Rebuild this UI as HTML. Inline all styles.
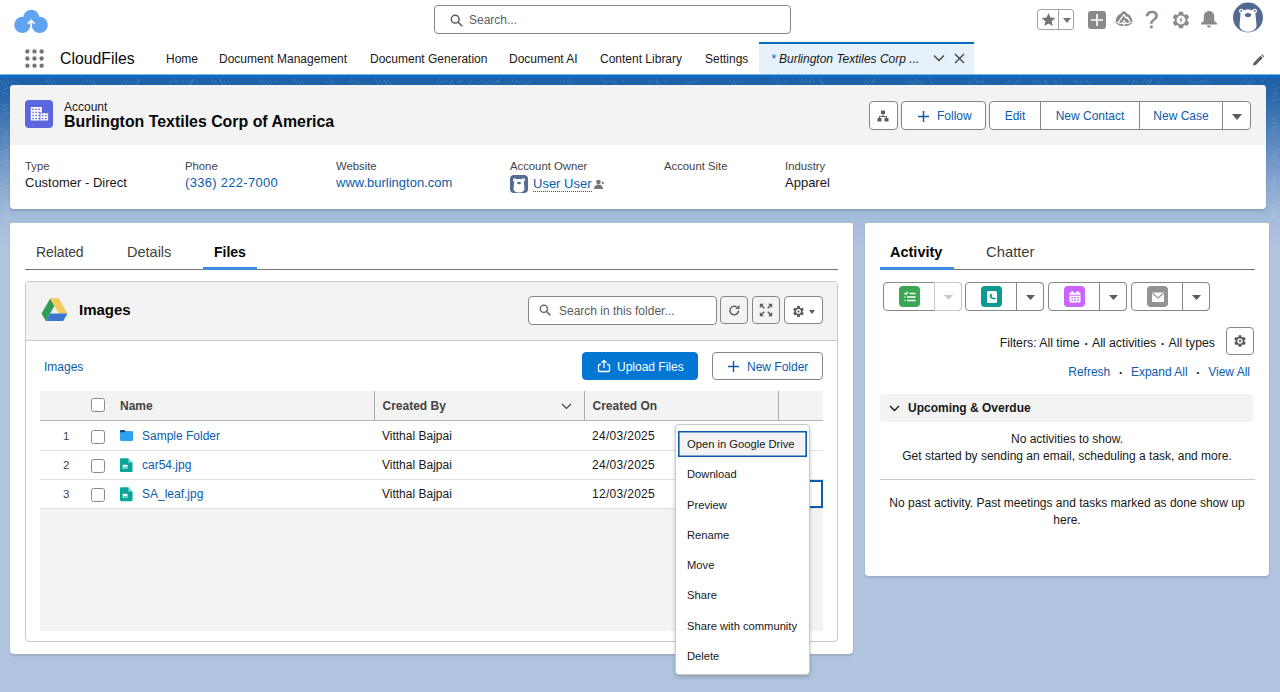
<!DOCTYPE html>
<html lang="en">
<head>
<meta charset="utf-8">
<title>Burlington Textiles Corp of America | Account | Salesforce</title>
<style>
*{box-sizing:border-box;margin:0;padding:0}
html,body{width:1280px;height:692px;overflow:hidden}
body{font-family:"Liberation Sans",sans-serif;font-size:12px;color:#181818;background:#b0c4df;position:relative}
a{color:#0b5cab;text-decoration:none}
.abs{position:absolute}
.t{position:absolute;white-space:nowrap;line-height:16px}
#bg{position:absolute;left:0;top:74px;width:1280px;height:618px;background:linear-gradient(to bottom,#1a5da6 0px,#2c69ac 25px,#5d8abf 70px,#88a7cf 110px,#a6bcdb 145px,#b0c4df 175px,#b0c4df 100%)}
#hdr{position:absolute;left:0;top:0;width:1280px;height:78px;background:#fff;border-bottom:3px solid #0b6cc4;box-shadow:inset 0 -1px 0 #7fb2e0}
.btn{position:absolute;height:28px;border:1px solid #868686;background:#fff;color:#0b5cab;font-size:12px;line-height:27px;padding-top:1px;text-align:center;white-space:nowrap}
.card{position:absolute;background:#fff;border-radius:4px;box-shadow:0 2px 2px rgba(0,0,0,.12)}
.lbl{color:#444;font-size:11.300px}
.val{font-size:13px;line-height:18px}

.tab{font-size:14px;line-height:20px;color:#3e3e3c}
table th{text-align:left;font-weight:bold;color:#444;padding:1px 0 0 7px;font-size:12px;position:relative}
table th.bl{border-left:1px solid #aeaeae}
table td{position:relative;height:29.300px;padding:0 0 0 7px;background:#fff;border-top:1px solid #e0e0e0;border-bottom:1px solid #e0e0e0;white-space:nowrap}
.cb{position:absolute;width:14px;height:14px;border:1px solid #8a8a8a;border-radius:2.500px;background:#fff}
.rn{position:absolute;left:23px;top:6px;font-size:11.500px;line-height:16px;color:#444}
.mi{height:26px;margin-bottom:4.250px;line-height:26px;padding-left:11px;color:#181818;white-space:nowrap}

.bg2{position:absolute;top:58px;width:79px;height:29px;border:1px solid #868686;border-radius:4px;background:#fff}
.bg2 .ic{position:absolute;left:15px;top:3px;width:21px;height:21px;border-radius:4px;display:flex;align-items:center;justify-content:center}
.bg2 .ar{position:absolute;left:50px;top:-1px;width:28px;height:29px;border:1px solid #868686;border-radius:0 4px 4px 0;display:flex;align-items:center;justify-content:center;background:#fff}
.ctr{left:0;width:404px;text-align:center;font-size:12px;color:#181818}

.dot{margin:0 1.700px;font-size:8px;position:relative;top:-1px}
.dot2{margin:0 8.900px;font-size:8px;position:relative;top:-1px;color:#181818}

td.dt{padding-left:8px;letter-spacing:.3px}

thead th{border-bottom:1px solid #b5b5b5}

.hb{height:29px;line-height:27px}

tr.r1 td{height:30.300px;padding-top:1px}

.r1 .rn,.r1 .cb,.r1 svg{margin-top:1px}
</style>
</head>
<body>
<div id="bg"></div>
<svg class="abs" style="left:0;top:78px;pointer-events:none" width="1280" height="160" viewBox="0 0 1280 160" fill="none" stroke="#fff" stroke-width=".8" stroke-opacity=".16"><path d="M4.0 7.1l-5.2 -6.5M6.9 7.3l-4.5 -5.6M10.2 6.0l-4.3 -5.4M13.4 5.1l-2.8 -3.5M18.4 6.6l-3.3 -4.2M48.2 5.6l-2.5 -5.0M51.7 6.0l-2.6 -5.3M55.3 6.4l-2.4 -4.8M88.5 5.2l-2.2 -4.4M92.3 6.5l-2.5 -4.9M95.5 6.9l-2.7 -5.4M121.9 6.7l3.1 -4.7M125.0 6.3l3.1 -4.7M129.9 5.7l2.5 -3.8M134.4 6.0l3.5 -5.3M137.3 6.2l3.6 -5.4M136.2 6.9l3.4 -5.1M169.2 6.2l3.4 -5.0M173.1 5.2l3.1 -4.6M175.6 5.2l2.2 -3.3M180.7 6.4l3.6 -5.3M184.2 6.8l3.6 -5.4M189.4 7.4l4.1 -6.2M189.0 6.2l3.0 -4.5M191.0 6.8l3.8 -5.8M196.1 6.2l2.6 -3.9M214.0 6.1l-2.7 -5.3M217.6 7.5l-2.8 -5.6M221.6 5.6l-2.2 -4.3M222.8 6.6l-2.9 -5.8M225.3 5.5l-1.6 -3.3M230.0 6.3l-2.8 -5.5M262.6 6.5l-4.0 -5.0M266.3 7.2l-5.3 -6.6M270.3 7.0l-3.8 -4.7M272.6 5.3l-3.2 -4.0M277.3 5.2l-3.6 -4.5M294.7 5.0l-2.9 -4.4M297.7 5.9l-3.5 -5.2M300.4 6.5l-2.9 -4.3M303.8 5.9l-3.2 -4.9M328.4 6.2l-2.5 -3.7M331.9 5.3l-3.1 -4.6M334.9 7.1l-4.0 -6.0M352.1 5.4l-3.0 -3.8M355.6 6.3l-4.6 -5.8M360.4 6.7l-3.6 -4.5M378.9 6.4l-4.3 -5.4M382.4 6.5l-3.8 -4.8M386.7 5.5l-2.8 -3.5M388.3 7.0l-4.6 -5.7M391.2 6.8l-4.3 -5.3M436.1 6.5l3.8 -5.6M439.4 6.8l3.1 -4.7M442.7 5.2l1.8 -2.8M444.9 5.8l2.9 -4.4M450.0 6.5l2.7 -4.1M450.1 5.9l2.4 -3.5M458.3 5.3l2.1 -3.1M459.5 5.5l2.4 -3.6M468.4 6.6l3.5 -5.2M478.4 5.2l3.2 -3.2M481.4 5.1l2.6 -2.6M485.6 6.6l5.2 -5.2M489.3 6.2l4.5 -4.5M494.8 6.4l5.6 -5.6M492.5 6.8l4.7 -4.7M496.0 5.3l3.3 -3.3M507.6 7.2l6.3 -6.3M515.2 5.8l2.5 -3.8M518.8 5.2l2.0 -3.0M522.9 6.7l2.9 -4.4M527.1 7.1l3.7 -5.5M565.3 7.2l-2.8 -5.7M569.2 6.9l-2.6 -5.2M571.4 6.5l-2.9 -5.8M574.3 6.7l-3.0 -6.1M604.3 5.5l-3.2 -4.9M607.2 6.1l-3.6 -5.4M610.0 5.2l-1.9 -2.9M614.1 6.5l-2.7 -4.1M616.6 6.3l-3.5 -5.2M624.0 5.6l-2.7 -4.1M650.1 6.1l-2.6 -5.2M653.5 5.8l-2.3 -4.5M657.6 5.5l-2.1 -4.2M659.7 6.9l-3.1 -6.2M666.5 5.9l-2.1 -4.1M683.7 6.0l3.6 -3.6M687.2 7.1l4.6 -4.6M689.7 6.3l4.9 -4.9M693.5 5.8l4.9 -4.9M728.8 5.0l2.4 -3.7M732.0 6.3l3.0 -4.5M734.6 7.0l3.0 -4.5M778.4 6.9l-4.2 -6.4M781.6 6.1l-3.5 -5.3M786.5 5.6l-2.3 -3.5M801.7 5.7l-2.3 -4.5M805.6 7.2l-3.2 -6.4M808.0 5.2l-2.3 -4.7M811.2 5.6l-1.9 -3.8M814.3 5.0l-2.1 -4.3M822.6 7.3l-3.0 -6.0M823.7 6.8l-3.1 -6.2M864.2 5.8l3.3 -4.9M867.4 5.7l2.5 -3.7M871.2 5.9l3.3 -5.0M872.7 5.0l2.7 -4.0M909.6 6.1l-4.1 -5.1M913.4 6.6l-3.9 -4.8M916.8 7.4l-4.1 -5.1M919.3 5.6l-3.7 -4.6M921.9 6.8l-3.6 -4.6M924.6 7.5l-4.0 -5.0M933.5 6.6l-4.8 -6.0M970.3 6.0l-3.3 -4.1M973.8 6.5l-3.2 -4.1M977.8 5.5l-3.9 -4.9M979.8 5.9l-4.3 -5.4M983.3 5.8l-2.7 -3.3M984.5 5.5l-2.6 -3.3M1005.1 6.6l5.6 -5.6M1008.3 5.2l3.2 -3.2M1013.0 6.5l5.7 -5.7M1015.2 6.6l5.5 -5.5M1016.8 7.1l4.7 -4.7M1035.6 7.5l-3.2 -6.3M1038.6 6.6l-2.3 -4.7M1041.3 7.2l-2.5 -5.1M1046.6 7.0l-2.5 -5.1M1047.6 6.3l-2.4 -4.7M1055.5 7.1l-2.5 -5.0M1057.3 6.7l-2.2 -4.4M1062.0 5.1l-2.1 -4.1M1075.9 5.1l-2.5 -3.7M1078.7 5.6l-2.7 -4.0M1082.2 5.2l-2.5 -3.8M1088.2 5.2l-2.0 -2.9M1090.0 6.2l-2.8 -4.2M1127.3 5.6l2.4 -3.6M1131.0 7.1l3.8 -5.7M1133.1 5.7l2.3 -3.4M1135.9 5.5l2.5 -3.7M1141.8 6.6l3.6 -5.5M1146.1 5.3l2.4 -3.6M1148.1 7.4l4.0 -6.0M1147.8 6.2l3.5 -5.3M1157.6 6.2l3.4 -5.1M1191.3 6.2l-4.4 -5.5M1194.5 6.3l-4.5 -5.6M1199.7 6.0l-2.8 -3.5M1203.6 5.2l-2.3 -2.8M1203.0 5.7l-2.9 -3.7M1207.8 6.6l-3.9 -4.9M1210.5 5.9l-4.2 -5.2M1239.8 6.2l5.7 -5.7M1243.2 5.4l4.2 -4.2M1246.3 7.1l6.0 -6.0M1248.2 7.1l5.1 -5.1M1251.6 6.8l4.4 -4.4M1260.1 5.9l4.9 -4.9M2.7 12.0l5.3 -2.4M2.1 15.5l4.3 -1.3M2.5 28.4l4.8 -2.0M2.4 31.9l5.1 -1.1M3.8 35.4l6.4 -1.7M3.4 55.9l4.1 -1.5M2.9 59.4l6.3 -1.7M2.6 62.9l4.1 -1.1M2.8 73.9l4.8 -2.5M3.5 77.4l6.0 -2.2M2.5 80.9l5.4 -1.7M2.2 84.4l5.9 -2.8M3.0 87.9l6.4 -1.9M4.0 102.9l5.3 -2.7M2.4 106.4l4.3 -2.3M2.2 109.9l4.7 -2.5M3.1 113.4l6.7 -1.5M3.5 127.8l4.6 -2.5M3.5 131.3l5.5 -1.9M2.7 134.8l6.1 -1.9M3.6 138.3l6.5 -2.8M3.8 141.8l5.2 -1.7M1272.7 12.0l6.6 -3.0M1271.1 15.5l6.1 -1.2M1271.9 19.0l5.8 -3.0M1271.8 22.5l6.8 -1.3M1271.5 42.3l4.3 -2.7M1272.0 45.8l6.0 -1.1M1272.4 49.3l5.9 -1.5M1271.9 52.8l5.7 -2.9M1272.6 56.3l4.7 -1.2M1272.9 73.5l5.9 -1.9M1271.9 77.0l6.3 -2.8M1271.6 80.5l6.8 -2.6M1271.5 84.0l6.4 -3.0M1271.6 100.0l4.9 -1.3M1271.5 103.5l5.6 -1.9M1271.1 107.0l5.2 -1.7M1271.1 110.5l4.6 -1.2M1272.3 114.0l4.2 -2.5M1271.5 128.6l4.1 -2.3M1271.8 132.1l6.0 -2.6M1272.6 135.6l6.2 -2.0M1271.4 139.1l6.9 -2.4"/></svg>
<header id="hdr">
  <!-- logo -->
  <svg class="abs" style="left:13px;top:9px" width="36" height="26" viewBox="0 0 36 26">
    <circle cx="9.300" cy="15.900" r="8.100" fill="#62a3f0"/><circle cx="18.300" cy="8.700" r="7.900" fill="#62a3f0"/><circle cx="26.700" cy="15.900" r="8.100" fill="#62a3f0"/><path d="M12 9h12.500v9h-12.500z" fill="#62a3f0"/>
    <path d="M18.200 25v-12.500" stroke="#fff" stroke-width="1.700" fill="none"/><path d="M14.800 14.800l3.400-3.400 3.400 3.400" stroke="#fff" stroke-width="1.700" fill="none" stroke-linejoin="miter"/>
  </svg>
  <!-- search -->
  <div class="abs" style="left:434px;top:5px;width:357px;height:29px;border:1px solid #868686;border-radius:4px;background:#fff">
    <svg class="abs" style="left:15px;top:8px" width="13" height="13" viewBox="0 0 13 13"><circle cx="5.2" cy="5.2" r="3.9" fill="none" stroke="#5c5c5c" stroke-width="1.5"/><path d="M8.2 8.2l3.6 3.6" stroke="#5c5c5c" stroke-width="1.6" stroke-linecap="round"/></svg>
    <span class="t" style="left:34px;top:6px;font-size:12px;color:#5c5c5c">Search...</span>
  </div>
  <!-- global actions -->
  <div class="abs" style="left:1037px;top:9px;width:37px;height:21px;border:1px solid #a3a3a3;border-radius:3px">
    <span class="abs" style="left:20px;top:0;width:1px;height:19px;background:#a3a3a3"></span>
    <svg class="abs" style="left:3px;top:2px" width="15" height="15" viewBox="0 0 24 24"><path fill="#747474" d="M12 1.500l3.100 7.200 7.800.7-5.900 5.200 1.800 7.700L12 18.200l-6.800 4.100 1.800-7.700L1.100 9.400l7.800-.7z"/></svg>
    <svg class="abs" style="left:25px;top:8px" width="8" height="5" viewBox="0 0 8 5"><path d="M0 0h8L4 5z" fill="#747474"/></svg>
  </div>
  <svg class="abs" style="left:1088px;top:11px" width="18" height="18" viewBox="0 0 18 18"><rect width="18" height="18" rx="3" fill="#8a8a8a"/><path d="M9 3v12M3 9h12" stroke="#fff" stroke-width="1.600"/></svg>
  <svg class="abs" style="left:1115px;top:11px" width="18" height="17" viewBox="0 0 18 17"><path d="M9 .3c1.300 0 2 .8 2.900 2.300 2.700 1 5.300 3.900 5.500 8 .1 1.300-.7 2.200-1.600 2.700-2.100 1.200-4.500 1.900-6.800 1.900s-4.700-.7-6.800-1.900C1.300 12.800.5 11.900.6 10.600.8 6.500 3.400 3.600 6.100 2.600 7 1.100 7.700.3 9 .3z" fill="#8a8a8a"/><path d="M3.300 11.300L8.800 3.600l2.600 3.700 1-1.200 2.500 4.500" fill="none" stroke="#fff" stroke-width="1.300" stroke-linejoin="round"/><path d="M1.500 11.200c2.300 1 5 1.500 7.500 1.500s5.200-.5 7.500-1.500" fill="none" stroke="#fff" stroke-width="1.200"/><path d="M7.300 12.500l1.700-3 1.700 3M9 13v2.500" fill="none" stroke="#fff" stroke-width="1.100"/></svg>
  <span class="t" style="left:1145px;top:7px;font-size:24px;line-height:26px;color:#8a8a8a;-webkit-text-stroke:.4px #8a8a8a">?</span>
  <svg class="abs" style="left:1171px;top:10px" width="20" height="20" viewBox="0 0 24 24"><path fill="#8a8a8a" d="M19.400 13c.04-.33.070-.660.070-1s-.03-.67-.07-1l2.100-1.650c.19-.15.240-.420.120-.640l-2-3.460c-.12-.22-.39-.3-.61-.22l-2.490 1c-.52-.4-1.080-.73-1.690-.98l-.38-2.650A.488.488 0 0 0 14 2h-4c-.25 0-.46.180-.49.420l-.38 2.650c-.61.250-1.170.59-1.690.98l-2.490-1c-.23-.09-.49 0-.61.220l-2 3.460c-.13.220-.07.490.12.640L4.570 11c-.4.330-.7.670-.07 1s.3.670.07 1l-2.110 1.650c-.19.150-.24.420-.12.640l2 3.460c.12.220.39.300.61.220l2.490-1c.52.400 1.080.73 1.690.98l.38 2.650c.3.240.24.420.49.420h4c.25 0 .46-.18.490-.42l.38-2.650c.61-.25 1.170-.59 1.690-.98l2.490 1c.23.090.49 0 .61-.22l2-3.460c.12-.22.070-.49-.12-.64L19.400 13z"/><circle cx="12" cy="12" r="5.300" fill="#fff"/><path d="M13.200 7.800l-3.400 4.700h2l-1 3.700 3.400-4.700h-2z" fill="#8a8a8a"/></svg>
  <svg class="abs" style="left:1199px;top:10px" width="20" height="19" viewBox="0 0 20 19"><path d="M10 1c3 0 5.200 2.300 5.200 5.300v3.700c0 1.500 1.300 2.400 2.800 3v1.500H2V13c1.500-.6 2.800-1.500 2.800-3V6.300C4.800 3.300 7 1 10 1z" fill="#8a8a8a"/><path d="M8 15.500a2 2 0 0 0 4 0z" fill="#8a8a8a"/></svg>
  <!-- avatar -->
  <svg class="abs" style="left:1233px;top:2px" width="30" height="31" viewBox="0 0 30 31"><circle cx="15" cy="15.500" r="15" fill="#536a90"/><circle cx="8.300" cy="9" r="2.300" fill="#fff"/><circle cx="21.700" cy="9" r="2.300" fill="#fff"/><circle cx="8.300" cy="9" r="1" fill="#536a90"/><circle cx="21.700" cy="9" r="1" fill="#536a90"/><path d="M7.300 14C7.300 9.500 10.500 7.500 15 7.500s7.700 2 7.700 6.500l.8 9.500c0 3.500-3.800 6.300-8.500 6.300s-8.500-2.800-8.500-6.300z" fill="#fff"/><ellipse cx="15" cy="13" rx="3.200" ry="2" fill="#536a90"/></svg>

  <!-- nav -->
  <svg class="abs" style="left:25px;top:49px" width="19" height="19" viewBox="0 0 20 20" fill="#747474"><circle cx="2.500" cy="2.500" r="2.300"/><circle cx="10" cy="2.500" r="2.300"/><circle cx="17.500" cy="2.500" r="2.300"/><circle cx="2.500" cy="10" r="2.300"/><circle cx="10" cy="10" r="2.300"/><circle cx="17.500" cy="10" r="2.300"/><circle cx="2.500" cy="17.500" r="2.300"/><circle cx="10" cy="17.500" r="2.300"/><circle cx="17.500" cy="17.500" r="2.300"/></svg>
  <span class="t" style="left:60px;top:48px;font-size:15.800px;line-height:22px;color:#080707">CloudFiles</span>
  <nav>
    <a class="t nv" style="left:166px">Home</a>
    <a class="t nv" style="left:219px">Document Management</a>
    <a class="t nv" style="left:370px">Document Generation</a>
    <a class="t nv" style="left:509px">Document AI</a>
    <a class="t nv" style="left:600px">Content Library</a>
    <a class="t nv" style="left:705px">Settings</a>
  </nav>
  <div class="abs" style="left:759px;top:42px;width:215px;height:32px;background:#e5f1fb;border-top:2px solid #0b6cc4">
    <span class="t" style="left:12px;top:7px;font-size:12px;font-style:italic;color:#181818"><span style="color:#0b5cab">*</span> Burlington Textiles Corp ...</span>
    <svg class="abs" style="left:174px;top:10px" width="12" height="8" viewBox="0 0 12 8"><path d="M1 1.500l5 5 5-5" stroke="#444" stroke-width="1.400" fill="none"/></svg>
    <svg class="abs" style="left:195px;top:9px" width="11" height="11" viewBox="0 0 11 11"><path d="M1 1l9 9M10 1l-9 9" stroke="#444" stroke-width="1.400" fill="none"/></svg>
  </div>
  <svg class="abs" style="left:1252px;top:54px" width="12.500" height="12.500" viewBox="0 0 14 14"><path d="M1 13l.8-3.300L9.500 2l2.500 2.500-7.700 7.700z M10.300 1.200l1-1 2.500 2.500-1 1z" fill="#5c5c5c"/></svg>
</header>
<style>.nv{top:51px;font-size:12px;color:#181818}</style>
<main id="main">
<!-- record header -->
<section class="card" style="left:10px;top:85px;width:1256px;height:124px;overflow:hidden">
  <div class="abs" style="left:0;top:0;width:1256px;height:60px;background:#f3f3f3"></div>
  <svg class="abs" style="left:15px;top:15px" width="28" height="28" viewBox="0 0 28 28"><rect width="28" height="28" rx="4" fill="#5b65dd"/><path fill="#fff" d="M5.800 7h11v13.700h-11z"/><path fill="#fff" stroke="#5b65dd" stroke-width=".8" d="M15 12.900h8.300v8.200H15z"/><rect x="5" y="20.700" width="19" height="1.500" fill="#5b65dd"/><g fill="#5b65dd"><rect x="7.3" y="8.6" width="1.500" height="1.400"/><rect x="10.4" y="8.6" width="1.500" height="1.400"/><rect x="13.5" y="8.6" width="1.500" height="1.400"/><rect x="7.3" y="11.7" width="1.500" height="1.400"/><rect x="10.4" y="11.7" width="1.500" height="1.400"/><rect x="13.5" y="11.7" width="1.500" height="1.400"/><rect x="7.3" y="14.8" width="1.500" height="1.400"/><rect x="10.4" y="14.8" width="1.500" height="1.400"/><rect x="13.5" y="14.8" width="1.500" height="1.400"/><rect x="7.3" y="17.9" width="1.500" height="1.400"/><rect x="10.4" y="17.9" width="1.500" height="1.400"/><rect x="13.5" y="17.9" width="1.500" height="1.400"/><rect x="16.9" y="14.9" width="1.600" height="1.400"/><rect x="20.0" y="14.9" width="1.600" height="1.400"/><rect x="16.9" y="17.9" width="1.600" height="1.400"/><rect x="20.0" y="17.9" width="1.600" height="1.400"/></g></svg>
  <span class="t" style="left:54px;top:14px;font-size:12px;color:#181818">Account</span>
  <h1 class="t" style="left:54px;top:26px;font-size:15.900px;line-height:22px;font-weight:bold;color:#080707">Burlington Textiles Corp of America</h1>

  <div class="btn hb" style="left:859px;top:16px;width:29px;border-radius:4px">
    <svg class="abs" style="left:7px;top:8px" width="12" height="12" viewBox="0 0 12 12" fill="#5c5c5c"><rect x="4" y="0.500" width="4" height="3.500"/><rect x="0.500" y="8" width="4" height="3.500"/><rect x="7.500" y="8" width="4" height="3.500"/><path d="M5.500 4h1v2h3.500v2h-1V7h-6v1h-1V6h3.500z"/></svg>
  </div>
  <div class="btn hb" style="left:891px;top:16px;width:85px;border-radius:4px;text-align:left;padding-left:35px"><svg class="abs" style="left:16px;top:9px" width="11" height="11" viewBox="0 0 11 11"><path d="M5.500 0v11M0 5.500h11" stroke="#0b5cab" stroke-width="1.500"/></svg>Follow</div>
  <div class="btn hb" style="left:979px;top:16px;width:52px;border-radius:4px 0 0 4px">Edit</div>
  <div class="btn hb" style="left:1030px;top:16px;width:100px;border-radius:0">New Contact</div>
  <div class="btn hb" style="left:1129px;top:16px;width:84px;border-radius:0">New Case</div>
  <div class="btn hb" style="left:1212px;top:16px;width:29px;border-radius:0 4px 4px 0"><svg class="abs" style="left:9px;top:12px" width="10" height="6" viewBox="0 0 10 6"><path d="M0 0h10L5 6z" fill="#5c5c5c"/></svg></div>

  <span class="t lbl" style="left:15px;top:73px">Type</span>
  <span class="t val" style="left:15px;top:89px">Customer - Direct</span>
  <span class="t lbl" style="left:175px;top:73px">Phone</span>
  <a class="t val" style="left:175px;top:89px;letter-spacing:.3px">(336) 222-7000</a>
  <span class="t lbl" style="left:326px;top:73px">Website</span>
  <a class="t val" style="left:326px;top:89px">www.burlington.com</a>
  <span class="t lbl" style="left:500px;top:73px">Account Owner</span>
  <svg class="abs" style="left:500px;top:90px" width="18" height="18" viewBox="0 0 18 18"><rect width="18" height="18" rx="4" fill="#566b90"/><circle cx="4.700" cy="5" r="1.700" fill="#fff"/><circle cx="13.300" cy="5" r="1.700" fill="#fff"/><path d="M4 9c0-3 2-5 5-5s5 2 5 5l.5 5c0 2.200-2.500 3.500-5.500 3.500S3.500 16.200 3.500 14z" fill="#fff"/><ellipse cx="9" cy="8" rx="2" ry="1.200" fill="#566b90"/></svg>
  <a class="t val" style="left:523px;top:92px;border-bottom:1px dotted #0b5cab;line-height:14px">User User</a>
  <svg class="abs" style="left:584px;top:94px" width="11" height="11" viewBox="0 0 11 11" fill="#747474"><circle cx="4.500" cy="3" r="2.300"/><path d="M0 10c0-3 2-4.500 4.500-4.500S9 7 9 10z"/><path d="M8 2.500l2.500 1.500-2.500 1.500z"/></svg>
  <span class="t lbl" style="left:654px;top:73px">Account Site</span>
  <span class="t lbl" style="left:775px;top:73px">Industry</span>
  <span class="t val" style="left:775px;top:89px">Apparel</span>
</section>
<!-- left tabs card -->
<section class="card" style="left:10px;top:223px;width:843px;height:431px;border-top:1px solid #fff;border-radius:2px 2px 4px 4px">
  <div class="abs" style="left:15px;top:45px;width:813px;height:1px;background:#747474"></div>
  <a class="t tab" style="left:26px;top:18px;font-size:14px;letter-spacing:-.1px">Related</a>
  <a class="t tab" style="left:117px;top:18px;font-size:14.500px">Details</a>
  <a class="t tab" style="left:204px;top:18px;font-weight:bold;color:#080707">Files</a>
  <div class="abs" style="left:193px;top:43px;width:54px;height:3px;background:#3c8ce4"></div>

  <div class="abs" style="left:15px;top:57px;width:813px;height:361px;border:1px solid #c9c9c9;border-radius:4px;background:#fff;overflow:hidden">
    <div class="abs" style="left:0;top:0;width:811px;height:59px;background:#f3f3f3;border-bottom:1px solid #c9c9c9"></div>
    <svg class="abs" style="left:15px;top:16px" width="27" height="24" viewBox="0 0 27 24"><path d="M9.200 0.500h8.600l8.700 15h-8.600z" fill="#fbbc04" opacity="0"/><path d="M9.200 .5L.5 15.500l4.300 7.500 8.700-15z" fill="#2f9e57"/><path d="M9.200 .5h8.600l8.700 15h-8.600z" fill="#f5cc5c"/><path d="M4.800 23l4.300-7.500h17.400L22.200 23z" fill="#3b76d0"/><path d="M9.200 .5h8.600l-4.300 7.500z" fill="#f5cc5c"/></svg>
    <span class="t" style="left:53px;top:18px;font-size:15px;line-height:20px;font-weight:bold;color:#080707">Images</span>
    <div class="abs" style="left:502px;top:14px;width:189px;height:29px;border:1px solid #868686;border-radius:4px;background:#fff">
      <svg class="abs" style="left:10px;top:7px" width="12" height="12" viewBox="0 0 13 13"><circle cx="5.200" cy="5.200" r="3.900" fill="none" stroke="#5c5c5c" stroke-width="1.400"/><path d="M8.200 8.200l3.600 3.600" stroke="#5c5c5c" stroke-width="1.500" stroke-linecap="round"/></svg>
      <span class="t" style="left:30px;top:6px;font-size:12px;color:#5c5c5c">Search in this folder...</span>
    </div>
    <div class="btn" style="left:694px;top:14px;width:28px;border-radius:4px;background:#f3f3f3"><svg class="abs" style="left:7px;top:7px" width="13" height="13" viewBox="0 0 13 13"><path d="M10.500 6.500a4.300 4.300 0 1 1-1.600-3.300" fill="none" stroke="#5c5c5c" stroke-width="1.400"/><path d="M11.500 1v4h-4z" fill="#5c5c5c"/></svg></div>
    <div class="btn" style="left:726px;top:14px;width:28px;border-radius:4px;background:#f3f3f3"><svg class="abs" style="left:6px;top:6px" width="14" height="14" viewBox="0 0 12 12" fill="#5c5c5c" stroke="#5c5c5c" stroke-width="1.200"><path d="M.7 4.200V.7h3.500zM11.300 4.200V.7H7.800zM.7 7.800v3.500h3.500zM11.300 7.800v3.500H7.800z" stroke="none"/><path d="M1.500 1.500l3 3M10.500 1.500l-3 3M1.500 10.500l3-3M10.500 10.500l-3-3" fill="none" stroke-width="1.300"/></svg></div>
    <div class="btn" style="left:758px;top:14px;width:39px;border-radius:4px"><svg class="abs" style="left:7px;top:8px" width="13" height="13" viewBox="0 0 24 24"><path fill="#5c5c5c" d="M19.400 13c.04-.33.070-.660.070-1s-.03-.67-.07-1l2.100-1.650c.19-.15.240-.420.120-.640l-2-3.460c-.12-.22-.39-.3-.61-.22l-2.490 1c-.52-.4-1.080-.73-1.690-.98l-.38-2.650A.488.488 0 0 0 14 2h-4c-.25 0-.46.180-.49.420l-.38 2.650c-.61.250-1.170.59-1.690.98l-2.490-1c-.23-.09-.49 0-.61.220l-2 3.460c-.13.220-.07.490.12.640L4.570 11c-.4.330-.7.670-.07 1s.3.670.07 1l-2.110 1.650c-.19.150-.24.420-.12.640l2 3.460c.12.220.39.300.61.220l2.490-1c.52.400 1.080.73 1.690.98l.38 2.650c.3.240.24.420.49.420h4c.25 0 .46-.18.490-.42l.38-2.650c.61-.25 1.170-.59 1.690-.98l2.490 1c.23.090.49 0 .61-.22l2-3.460c.12-.22.070-.49-.12-.64L19.400 13z"/><circle cx="12" cy="12" r="4.500" fill="#fff"/><circle cx="12" cy="12" r="2" fill="#5c5c5c"/></svg><svg class="abs" style="left:24px;top:13px" width="6" height="4" viewBox="0 0 6 4"><path d="M0 0h6L3 4z" fill="#5c5c5c"/></svg></div>

    <a class="t" style="left:18px;top:77px;font-size:12px">Images</a>
    <div class="btn" style="left:556px;top:70px;width:116px;border-radius:4px;background:#0176d3;border-color:#0176d3;color:#fff;text-align:left;padding-left:34px"><svg class="abs" style="left:14px;top:6px" width="14" height="14" viewBox="0 0 14 14" fill="none" stroke="#fff" stroke-width="1.300"><path d="M4 5.500H2.500a1 1 0 0 0-1 1v5a1 1 0 0 0 1 1h9a1 1 0 0 0 1-1v-5a1 1 0 0 0-1-1H10"/><path d="M7 9V1.500M4.500 3.800L7 1.300l2.500 2.500"/></svg>Upload Files</div>
    <div class="btn" style="left:686px;top:70px;width:111px;border-radius:4px;text-align:left;padding-left:34px"><svg class="abs" style="left:15px;top:8px" width="11" height="11" viewBox="0 0 11 11"><path d="M5.500 0v11M0 5.500h11" stroke="#0b5cab" stroke-width="1.400"/></svg>New Folder</div>

    <!-- table -->
    <div class="abs" style="left:14px;top:109px;width:783px;height:240px;background:#f3f3f3"></div>
    <table class="abs" style="left:14px;top:109px;width:783px;border-collapse:collapse;table-layout:fixed;font-size:12px">
      <colgroup><col style="width:73px"><col style="width:261px"><col style="width:210px"><col style="width:194px"><col style="width:45px"></colgroup>
      <thead><tr style="height:29px;background:#f3f3f3">
        <th><span class="cb" style="left:51px;top:7px"></span></th>
        <th>Name</th>
        <th class="bl" style="padding-left:8px">Created By<svg class="abs" style="left:186px;top:12px" width="11" height="7" viewBox="0 0 11 7"><path d="M1 1l4.500 4.500L10 1" fill="none" stroke="#444" stroke-width="1.200"/></svg></th>
        <th class="bl" style="padding-left:8px">Created On</th>
        <th class="bl"></th></tr></thead>
      <tbody>
        <tr class="r1"><td><span class="rn">1</span><span class="cb" style="left:51px;top:8px"></span></td><td><svg class="abs" style="left:7px;top:8px" width="13" height="11" viewBox="0 0 13 11"><path d="M0 1.200C0 .5.500 0 1.200 0h3.300l1.300 1.400H13V4H0z" fill="#12418c"/><path d="M0 2.300h11.800c.7 0 1.200.5 1.200 1.200v6.300c0 .7-.5 1.200-1.200 1.200H1.200C.5 11 0 10.500 0 9.800z" fill="#2ea2f0"/><path d="M4.700 1.500h7.100c.7 0 1.200.5 1.200 1.200v1H3.800z" fill="#2ea2f0"/></svg><a style="margin-left:22px">Sample Folder</a></td><td style="padding-left:8px">Vitthal Bajpai</td><td class="dt">24/03/2025</td><td></td></tr>
        <tr><td><span class="rn">2</span><span class="cb" style="left:51px;top:8px"></span></td><td><svg class="abs" style="left:7px;top:7px" width="13" height="14.500" viewBox="0 0 14 15"><path d="M1.500 0h7.500l4.500 4.500v9a1.500 1.500 0 0 1-1.500 1.500h-10.500a1.500 1.500 0 0 1-1.500-1.500v-12a1.500 1.500 0 0 1 1.500-1.500z" fill="#06a59a"/><path d="M9 0l4.500 4.500h-4.500z" fill="#fff" opacity=".55"/><rect x="3" y="7" width="5" height="4.500" rx=".5" fill="#fff"/><path d="M3.500 11l1.500-2 1 1 .7-.7 1 1.700z" fill="#06a59a"/></svg><a style="margin-left:22px">car54.jpg</a></td><td style="padding-left:8px">Vitthal Bajpai</td><td class="dt">24/03/2025</td><td></td></tr>
        <tr><td><span class="rn">3</span><span class="cb" style="left:51px;top:8px"></span></td><td><svg class="abs" style="left:7px;top:7px" width="13" height="14.500" viewBox="0 0 14 15"><path d="M1.500 0h7.500l4.500 4.500v9a1.500 1.500 0 0 1-1.500 1.500h-10.500a1.500 1.500 0 0 1-1.500-1.500v-12a1.500 1.500 0 0 1 1.500-1.500z" fill="#06a59a"/><path d="M9 0l4.500 4.500h-4.500z" fill="#fff" opacity=".55"/><rect x="3" y="7" width="5" height="4.500" rx=".5" fill="#fff"/><path d="M3.500 11l1.500-2 1 1 .7-.7 1 1.700z" fill="#06a59a"/></svg><a style="margin-left:22px">SA_leaf.jpg</a></td><td style="padding-left:8px">Vitthal Bajpai</td><td class="dt">12/03/2025</td><td style="box-shadow:inset 0 0 0 2px #0b5cab"></td></tr>
      </tbody>
    </table>
  </div>

  <!-- action menu -->
  <ul class="abs" style="left:665px;top:200px;width:135px;height:251px;list-style:none;background:#fff;border:1px solid #c9c9c9;border-radius:4px;box-shadow:0 2px 4px rgba(0,0,0,.2);padding-top:6px;font-size:11.200px">
    <li class="mi" style="box-shadow:inset 0 0 0 1.600px #0b5cab;background:#f3f3f3;margin:0 2px 4.250px;padding-left:9px">Open in Google Drive</li>
    <li class="mi">Download</li>
    <li class="mi">Preview</li>
    <li class="mi">Rename</li>
    <li class="mi">Move</li>
    <li class="mi">Share</li>
    <li class="mi">Share with community</li>
    <li class="mi">Delete</li>
  </ul>
</section>
<!-- right activity card -->
<section class="card" style="left:865px;top:223px;width:404px;height:353px;border-top:1px solid #fff;border-radius:2px 2px 4px 4px">
  <div class="abs" style="left:15px;top:45px;width:375px;height:1px;background:#747474"></div>
  <a class="t tab" style="left:25px;top:18px;font-weight:bold;color:#080707;font-size:14.500px">Activity</a>
  <a class="t tab" style="left:121px;top:18px;font-size:14.800px">Chatter</a>
  <div class="abs" style="left:15px;top:43px;width:74px;height:3px;background:#3c8ce4"></div>

  <div class="bg2" style="left:18px"><span class="ic" style="background:#3ba755"><svg width="14" height="14" viewBox="0 0 14 14" fill="none" stroke="#fff" stroke-width="1.500"><path d="M1.500 3l1.300 1.300L5 2M6.500 3.500h6M4 7h8.500M4 10.500h8.500"/><path d="M1.500 7h1M1.500 10.500h1"/></svg></span><span class="ar" style="border-color:#c9c9c9"><svg style="margin-top:2px" width="9" height="5" viewBox="0 0 9 5"><path d="M0 0h9L4.500 5z" fill="#c9c9c9"/></svg></span></div>
  <div class="bg2" style="left:100px"><span class="ic" style="background:#0a9a92"><svg width="14" height="14" viewBox="0 0 14 14"><rect x="2" y="1" width="10" height="12" rx="1.500" fill="#fff"/><path d="M5.500 4c.5-.5 1-.3 1.200.2l.3.800c.1.300 0 .5-.2.700-.2.300-.2.500 0 .9.300.5.700.9 1.200 1.200.4.200.6.200.9 0 .2-.2.400-.3.700-.2l.8.300c.5.200.7.700.2 1.200-.7.700-1.700.6-2.800 0C6.500 9.200 5.600 8.300 5 7.100 4.500 6 4.500 4.800 5.500 4z" fill="#0a9a92"/></svg></span><span class="ar"><svg style="margin-top:2px" width="9" height="5" viewBox="0 0 9 5"><path d="M0 0h9L4.500 5z" fill="#5c5c5c"/></svg></span></div>
  <div class="bg2" style="left:183px"><span class="ic" style="background:#cb65ff"><svg width="14" height="14" viewBox="0 0 14 14"><rect x="1.500" y="2.500" width="11" height="10" rx="1.200" fill="#fff"/><rect x="3.500" y="1" width="1.500" height="3" fill="#fff"/><rect x="9" y="1" width="1.500" height="3" fill="#fff"/><g fill="#cb65ff"><rect x="1.500" y="4.700" width="11" height="1"/><rect x="3.300" y="7" width="1.600" height="1.400"/><rect x="6.200" y="7" width="1.600" height="1.400"/><rect x="9.100" y="7" width="1.600" height="1.400"/><rect x="3.300" y="9.600" width="1.600" height="1.400"/><rect x="6.200" y="9.600" width="1.600" height="1.400"/><rect x="9.100" y="9.600" width="1.600" height="1.400"/></g></svg></span><span class="ar"><svg style="margin-top:2px" width="9" height="5" viewBox="0 0 9 5"><path d="M0 0h9L4.500 5z" fill="#5c5c5c"/></svg></span></div>
  <div class="bg2" style="left:266px"><span class="ic" style="background:#939393"><svg width="14" height="14" viewBox="0 0 14 14"><rect x="1" y="2.500" width="12" height="9.500" rx="1" fill="#fff"/><path d="M1.500 3.300l5.500 4.700 5.500-4.700" fill="none" stroke="#939393" stroke-width="1.200"/></svg></span><span class="ar"><svg style="margin-top:2px" width="9" height="5" viewBox="0 0 9 5"><path d="M0 0h9L4.500 5z" fill="#5c5c5c"/></svg></span></div>

  <p class="t" style="right:54px;top:111px;font-size:12.300px;color:#181818">Filters: All time <span class="dot">•</span> All activities <span class="dot">•</span> All types</p>
  <div class="btn" style="left:361px;top:103px;width:28px;border-radius:4px"><svg class="abs" style="left:6px;top:6px" width="14" height="14" viewBox="0 0 24 24"><path fill="#5c5c5c" d="M19.400 13c.04-.33.070-.660.070-1s-.03-.67-.07-1l2.100-1.650c.19-.15.240-.420.120-.640l-2-3.460c-.12-.22-.39-.3-.61-.22l-2.490 1c-.52-.4-1.080-.73-1.690-.98l-.38-2.650A.488.488 0 0 0 14 2h-4c-.25 0-.46.180-.49.420l-.38 2.650c-.61.250-1.170.59-1.690.98l-2.490-1c-.23-.09-.49 0-.61.220l-2 3.460c-.13.220-.07.490.12.640L4.570 11c-.4.330-.7.670-.07 1s.3.670.07 1l-2.110 1.650c-.19.150-.24.420-.12.640l2 3.460c.12.220.39.300.61.220l2.490-1c.52.400 1.080.73 1.690.98l.38 2.650c.3.240.24.420.49.420h4c.25 0 .46-.18.490-.42l.38-2.650c.61-.25 1.170-.59 1.690-.98l2.490 1c.23.090.49 0 .61-.22l2-3.460c.12-.22.070-.49-.12-.64L19.400 13z"/><circle cx="12" cy="12" r="4.500" fill="#fff"/><circle cx="12" cy="12" r="2" fill="#5c5c5c"/></svg></div>
  <p class="t" style="right:19px;top:140px;font-size:12px;color:#181818"><a>Refresh</a><span class="dot2">•</span><a>Expand All</a><span class="dot2">•</span><a>View All</a></p>

  <div class="abs" style="left:15px;top:170px;width:373px;height:28px;background:#f3f3f3;border-radius:4px">
    <svg class="abs" style="left:9px;top:11px" width="11" height="7" viewBox="0 0 11 7"><path d="M1 1l4.500 4.500L10 1" fill="none" stroke="#181818" stroke-width="1.400"/></svg>
    <span class="t" style="left:28px;top:6px;font-size:12px;font-weight:bold;color:#181818">Upcoming &amp; Overdue</span>
  </div>
  <p class="t ctr" style="top:207px">No activities to show.</p>
  <p class="t ctr" style="top:224px">Get started by sending an email, scheduling a task, and more.</p>
  <div class="abs" style="left:15px;top:255px;width:375px;height:1px;background:#c9c9c9"></div>
  <p class="t ctr" style="top:271px">No past activity. Past meetings and tasks marked as done show up</p>
  <p class="t ctr" style="top:288px">here.</p>
</section>
</main>
</body>
</html>
